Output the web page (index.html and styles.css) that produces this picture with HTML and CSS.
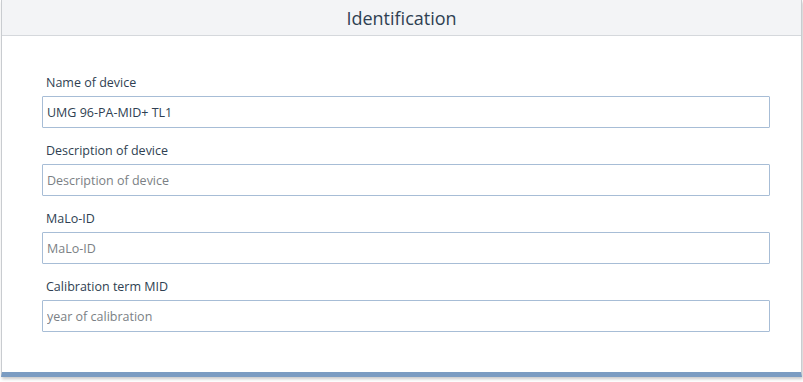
FILE: index.html
```html
<!DOCTYPE html>
<html>
<head>
<meta charset="utf-8">
<link rel="stylesheet" href="styles.css">
</head>
<body>
<div class="card">
  <div class="card-header">Identification</div>
  <div class="card-body">
    <div class="field">
      <label class="label">Name of device</label>
      <input class="input" type="text" value="UMG 96-PA-MID+ TL1">
    </div>
    <div class="field">
      <label class="label">Description of device</label>
      <input class="input" type="text" placeholder="Description of device">
    </div>
    <div class="field">
      <label class="label">MaLo-ID</label>
      <input class="input" type="text" placeholder="MaLo-ID">
    </div>
    <div class="field">
      <label class="label">Calibration term MID</label>
      <input class="input" type="text" placeholder="year of calibration">
    </div>
  </div>
</div>
</body>
</html>
```

FILE: styles.css
```css
html, body {
  margin: 0;
  padding: 0;
  background: #ececec;
  font-family: "Open Sans", "Noto Sans", sans-serif;
}
body {
  width: 803px;
  height: 382px;
  overflow: hidden;
  background: #ffffff;
}
.card {
  margin-left: 1px;
  width: 799px;
  border-left: 1px solid #c9ccd0;
  border-right: 1px solid #c9ccd0;
  border-bottom: 5px solid #7b9cc2;
  background: #fff;
  box-shadow: 1px 2px 3px rgba(0,0,0,0.22);
}
.card-header {
  height: 35px;
  background: #f3f4f6;
  border-bottom: 1px solid #d5d8dc;
  text-align: center;
  font-size: 18px;
  line-height: 36px;
  color: #2f3f52;
}
.card-body {
  padding: 38px 31px 40px 40px;
  display: flex;
  flex-direction: column;
  gap: 14px;
}
.field {
  display: flex;
  flex-direction: column;
  gap: 4px;
}
.label {
  padding-left: 4px;
  font-size: 12.5px;
  line-height: 18px;
  color: #2f3f52;
}
.input {
  box-sizing: border-box;
  height: 32px;
  width: 100%;
  margin: 0;
  border: 1px solid #a7bdd6;
  border-radius: 1px;
  padding: 0 4px;
  font-family: inherit;
  font-size: 12.5px;
  color: #2f3f52;
  background: #fff;
  outline: none;
}
.input::placeholder {
  color: #7b7f85;
}
```
